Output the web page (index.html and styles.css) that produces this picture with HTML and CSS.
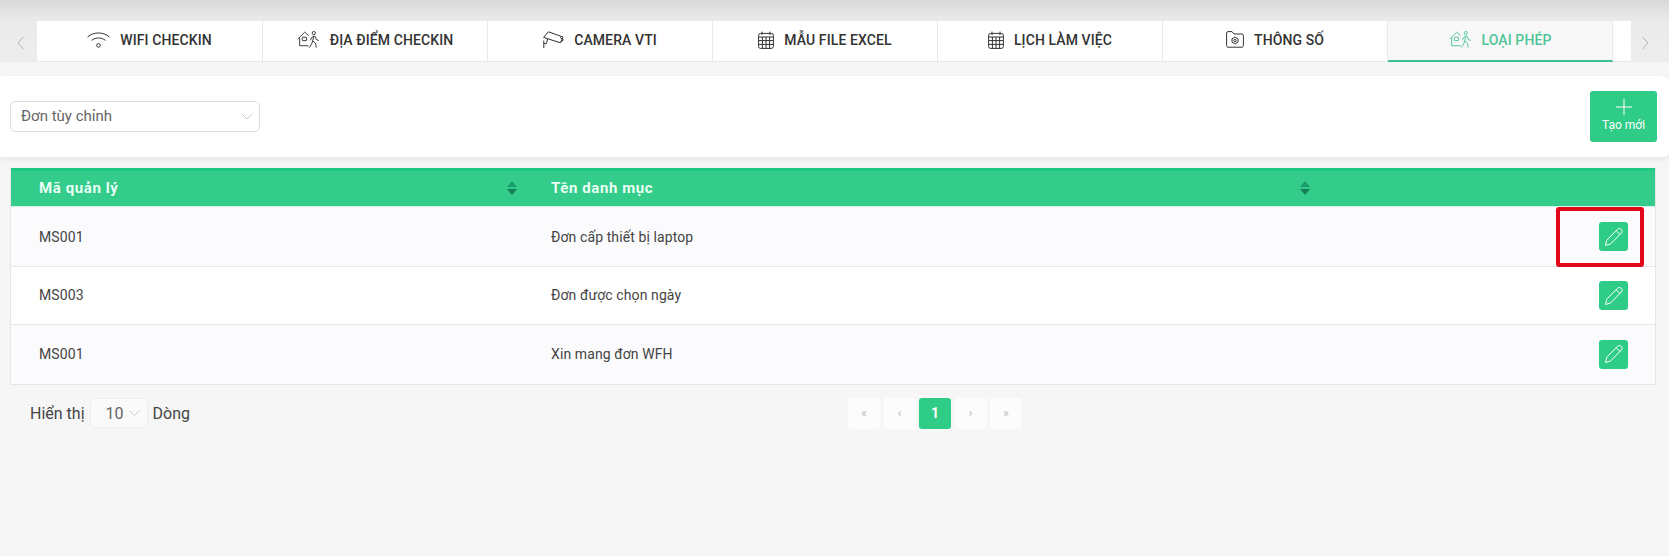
FILE: index.html
```html
<!DOCTYPE HTML><html>
<head>
  <title>Loại phép</title>
  <meta name="viewport" content="width=device-width, initial-scale=1">
  <link rel="stylesheet" href="styles.css">
</head>
<body>
  <svg class="defs" width="0" height="0">
    <symbol id="ic-house" viewBox="0 0 24 18">
      <path d="M0.6 8.6 L8 1.2 L12.2 5 M2.6 7.2 V15.6 H12"/>
      <rect x="5.4" y="6.6" width="4.6" height="3.6" rx="0.6"/>
      <circle cx="17.6" cy="2.2" r="1.7"/>
      <path d="M15 7.2 L17.6 5.4 L19.4 6 L20.2 9 L23 10 M17.6 5.4 L16.4 10.4 L19.4 13 L20.2 17.6 M16.4 10.4 L15.4 13.6 L12.8 17.6 M15 7.2 L14.2 9.8"/>
    </symbol>
    <symbol id="ic-cal" viewBox="0 0 16 18">
      <rect x="0.6" y="2.4" width="14.8" height="15" rx="2"/>
      <path d="M4 0.6 V4 M12 0.6 V4 M0.6 6 H15.4 M0.6 9.6 H15.4 M0.6 13.4 H15.4 M4.4 6 V17.4 M8 6 V17.4 M11.6 6 V17.4"/>
    </symbol>
    <symbol id="ic-pen" viewBox="0 0 18 18">
      <path d="M2.4 12 L12 2.2 C13 1.2 14.4 1 15.4 2 C16.6 3 16.6 4.4 15.6 5.4 L5.8 15.4 L1.4 16.6 Z M11 3.4 L14.4 6.8"/>
    </symbol>
  </svg>

  <div class="topbar">
    <div class="arrow prev"><svg width="8" height="14" viewBox="0 0 8 14"><path d="M6.5 1 L1 7 L6.5 13"/></svg></div>
    <div class="tabs">
      <a class="tab">
        <svg class="ico" width="23" height="16" viewBox="0 0 23 16"><path d="M0.6 5 C6.5 -0.4 16.5 -0.4 22.4 5 M4.6 8.4 C8.4 5.2 14.6 5.2 18.4 8.4"/><circle cx="11.5" cy="13.4" r="1.8"/></svg>
        WIFI CHECKIN
      </a>
      <a class="tab"><svg class="ico" width="23" height="17"><use href="#ic-house"/></svg>ĐỊA ĐIỂM CHECKIN</a>
      <a class="tab">
        <svg class="ico" width="21" height="18" viewBox="0 0 21 18"><path d="M0.6 6.4 L5.4 0.8 L20 6 L17.4 11.8 Z M17 6.4 L20.4 8.8 L18 11 M4.6 8 L3.4 12.6 H0.8 M0.8 9.6 V17"/></svg>
        CAMERA VTI
      </a>
      <a class="tab"><svg class="ico" width="16" height="18"><use href="#ic-cal"/></svg>MẪU FILE EXCEL</a>
      <a class="tab"><svg class="ico" width="16" height="18"><use href="#ic-cal"/></svg>LỊCH LÀM VIỆC</a>
      <a class="tab">
        <svg class="ico" width="18" height="17" viewBox="0 0 18 17"><path d="M0.6 14.6 V2 C0.6 1.2 1.2 0.6 2 0.6 H6 L8 3 H16 C16.8 3 17.4 3.6 17.4 4.4 V14.6 C17.4 15.6 16.8 16.2 16 16.2 H2 C1.2 16.2 0.6 15.6 0.6 14.6 Z"/><circle cx="9" cy="9.6" r="1.2"/><path d="M9 6 L12 7.8 V11.2 L9 13 L6 11.2 V7.8 Z"/></svg>
        THÔNG SỐ
      </a>
      <a class="tab active"><svg class="ico" width="23" height="17"><use href="#ic-house"/></svg>LOẠI PHÉP</a>
      <div class="tab-rest"></div>
    </div>
    <div class="arrow next"><svg width="8" height="14" viewBox="0 0 8 14"><path d="M1.5 1 L7 7 L1.5 13"/></svg></div>
  </div>

  <div class="toolbar">
    <div class="select">Đơn tùy chỉnh
      <svg width="12" height="7" viewBox="0 0 12 7"><path d="M0.5 0.5 L6 6 L11.5 0.5"/></svg>
    </div>
    <button class="btn-new">
      <svg width="16" height="16" viewBox="0 0 16 16"><path d="M8 0 V16 M0 8 H16"/></svg>
      Tạo mới
    </button>
  </div>

  <div class="table-wrap">
    <table>
      <colgroup><col class="c1"><col class="c2"><col></colgroup>
      <thead>
        <tr>
          <th><span class="th-in">Mã quản lý <i class="sort"></i></span></th>
          <th><span class="th-in">Tên danh mục <i class="sort"></i></span></th>
          <th></th>
        </tr>
      </thead>
      <tbody>
        <tr class="odd first">
          <td>MS001</td><td>Đơn cấp thiết bị laptop</td>
          <td class="act"><a class="edit"><svg width="20" height="20"><use href="#ic-pen"/></svg></a><span class="mark"></span></td>
        </tr>
        <tr>
          <td>MS003</td><td>Đơn được chọn ngày</td>
          <td class="act"><a class="edit"><svg width="20" height="20"><use href="#ic-pen"/></svg></a></td>
        </tr>
        <tr class="odd last">
          <td>MS001</td><td>Xin mang đơn WFH</td>
          <td class="act"><a class="edit"><svg width="20" height="20"><use href="#ic-pen"/></svg></a></td>
        </tr>
      </tbody>
    </table>
  </div>

  <div class="footer">
    <div class="size">Hiển thị
      <span class="size-box">10 <svg width="11" height="6" viewBox="0 0 11 6"><path d="M0.5 0.5 L5.5 5.5 L10.5 0.5"/></svg></span>
      Dòng
    </div>
    <div class="pager">
      <a>«</a><a>‹</a><a class="on">1</a><a>›</a><a>»</a>
    </div>
  </div>
</body>
</html>
```

FILE: styles.css
```css
html {font-family: Roboto, "Liberation Sans", sans-serif;}
body {margin: 0; background: #f6f6f6; color: #333; min-height: 556px;}
.defs {position: absolute;}

.topbar {display: flex; height: 62px; padding-top: 21px; box-sizing: border-box; background: linear-gradient(#d9d9d9, #ebebeb 22px, #ededed);}
.arrow {display: flex; align-items: center; justify-content: center; box-sizing: border-box; padding-top: 2px;}
.prev {width: 37px; padding-left: 5px;}
.next {width: 38px; padding-right: 10px;}
.arrow svg {fill: none; stroke: #b5b5b5; stroke-width: 1;}
.tabs {flex: 1; display: flex; background: #fff; border-bottom: 1px solid #e8e8e8;}
.tab {width: 225px; display: flex; align-items: center; justify-content: center; gap: 10px; font-size: 14px; font-weight: 500; letter-spacing: .1px; color: #333; border-right: 1px solid #e8e8e8; box-sizing: border-box; padding-bottom: 3px;}
.tab:first-child {width: 226px;}
.tab-rest {flex: 1;}
.ico {fill: none; stroke: #333; stroke-width: 1;}
.tab.active {color: #4fc497; background: #f8f8f8; border-bottom: 2px solid #3cbf90; margin-bottom: -1px; padding-bottom: 2px;}
.tab.active .ico {stroke: #4fc497;}

.toolbar {display: flex; align-items: center; justify-content: space-between; margin-top: 14px; height: 81px; padding: 0 12px 0 10px; background: #fff; border-radius: 0 6px 6px 0; box-shadow: 0 2px 6px rgba(0,0,0,.08);}
.select {width: 250px; height: 31px; box-sizing: border-box; display: flex; align-items: center; justify-content: space-between; padding: 0 6px 2px 10px; font-size: 15px; color: #666; border: 1px solid #ddd; border-radius: 5px;}
.select svg {fill: none; stroke: #ccc; stroke-width: 1; margin-top: 2px;}
.btn-new {width: 67px; height: 51px; display: flex; flex-direction: column; align-items: center; gap: 3px; padding: 8px 0 0; border: 0; border-radius: 3px; background: #2ecc87; color: #fff; font: 12px Roboto, sans-serif;}
.btn-new svg {stroke: #fff; stroke-width: 1;}

.table-wrap {margin: 11px 13px 0 10px; border: 1px solid #e6e6e6; border-top: 0; background: #fff;}
table {width: 100%; border-collapse: collapse; table-layout: fixed; font-size: 14px;}
.c1 {width: 512px;}
.c2 {width: 793px;}
th {height: 37px; padding: 0; background: #33cc8a; border-top: 3px solid #1fc985; border-bottom: 1px solid #d4f5e6; box-sizing: border-box; color: #e9fff5; font-size: 15px; font-weight: 700; text-align: left; letter-spacing: .6px;}
.th-in {display: flex; align-items: center; justify-content: space-between; padding: 0 11px 2px 28px; height: 100%; box-sizing: border-box;}
.sort {width: 0; height: 14px; position: relative;}
.sort:before, .sort:after {content: ""; position: absolute; left: -5px; border-left: 5px solid transparent; border-right: 5px solid transparent;}
.sort:before {top: 0; border-bottom: 6px solid #1b9c6a;}
.sort:after {bottom: 0; border-top: 6px solid #157f56;}
td {height: 58px; padding: 0 0 1px 28px; box-sizing: border-box; border-bottom: 1px solid #e6e6e6; color: #444; letter-spacing: .1px;}
.first td {height: 60px; padding-bottom: 0;}
.last td {height: 59px; border-bottom: 0;}
tr.odd td {background: #fbfbfd;}
td.act {position: relative; text-align: right; padding: 0 27px 0 0;}
.edit {display: inline-flex; width: 29px; height: 29px; align-items: center; justify-content: center; background: #2ecc87; border-radius: 3px; vertical-align: middle;}
.edit svg {fill: none; stroke: #fff; stroke-width: .9;}
.mark {position: absolute; right: 11px; top: 0; width: 88px; height: 60px; box-sizing: border-box; border: 4px solid #e3071b; border-radius: 3px;}

.footer {display: flex; align-items: center; margin-top: 13px; padding-left: 30px;}
.size {width: 818px; display: flex; align-items: center; gap: 5px; font-size: 16px; color: #444;}
.size-box {width: 58px; height: 30px; box-sizing: border-box; display: flex; align-items: center; justify-content: space-between; padding: 0 7px 0 15px; background: #fafafa; border: 1px solid #eee; border-radius: 5px; color: #666;}
.size-box svg {fill: none; stroke: #ccc; stroke-width: 1;}
.pager {display: flex; gap: 3.5px;}
.pager a {width: 32px; height: 31px; display: flex; align-items: center; justify-content: center; background: #fcfcfc; border-radius: 3px; color: #bbb; font-size: 12px;}
.pager a.on {background: #2ecc87; color: #fff; font-weight: 700; font-size: 14px;}
```
